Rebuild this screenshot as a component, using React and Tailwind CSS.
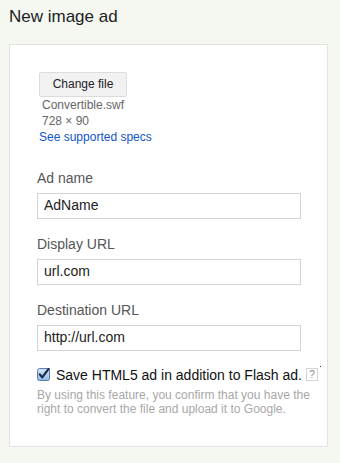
import React from 'react';

const fields = [
  { label: 'Ad name', value: 'AdName' },
  { label: 'Display URL', value: 'url.com' },
  { label: 'Destination URL', value: 'http://url.com' },
];

function CheckIcon() {
  return (
    <svg width="13" height="13" viewBox="0 0 13 13" className="shrink-0">
      <defs>
        <linearGradient id="cb" x1="0" y1="0" x2="0" y2="1">
          <stop offset="0" stopColor="#d6e6f7" />
          <stop offset="1" stopColor="#8fb8e6" />
        </linearGradient>
      </defs>
      <rect x="0.5" y="0.5" width="12" height="12" rx="2" fill="url(#cb)" stroke="#5a7fae" />
      <path d="M2.8 6.4 L5.2 9.4 L11.6 0.8" fill="none" stroke="#1a2a4a" strokeWidth="2.2" strokeLinecap="round" strokeLinejoin="round" />
    </svg>
  );
}

export default function App() {
  return (
    <div className="w-[340px] h-[463px] bg-[#f4f8f1] font-['Liberation_Sans',Arial,sans-serif] overflow-hidden">
      <h1 className="pl-[9px] pt-[6px] h-[44px] text-[17px] leading-[22px] text-[#222]">New image ad</h1>

      <div className="ml-[9px] w-[319px] h-[403px] bg-white border border-[#e3e3e3] pl-[27px] pt-[26px]">
        {/* file section */}
        <div className="pl-[2px]">
          <button className="h-[25px] w-[88px] bg-[#f2f2f2] border border-[#dcdcdc] rounded-[2px] text-[12px] text-[#222]">
            Change file
          </button>
          <div className="pl-[3px] text-[12px] leading-[16px] text-[#666]">
            <div>Convertible.swf</div>
            <div>728 × 90</div>
          </div>
          <a className="block text-[12px] leading-[16px] text-[#1155cc]">See supported specs</a>
        </div>

        {/* fields */}
        <div className="mt-[23px] flex flex-col gap-[15px]">
          {fields.map((f) => (
            <div key={f.label} className="flex flex-col">
              <label className="text-[14px] leading-[20px] text-[#555]">{f.label}</label>
              <div className="mt-[5px] w-[264px] h-[26px] border border-[#d4d4d4] px-[6px] flex items-center text-[14px] text-[#222]">
                {f.value}
              </div>
            </div>
          ))}
        </div>

        {/* html5 option */}
        <div className="mt-[15px] flex items-center">
          <CheckIcon />
          <span className="ml-[6px] text-[14px] leading-[18px] text-[#111]">Save HTML5 ad in addition to Flash ad.</span>
          <span className="ml-[4px] w-[12px] h-[13px] border border-[#d4d4d4] flex items-center justify-center text-[10px] text-[#888]">?</span>
          <span className="self-start ml-[2px] w-[1px] h-[1px] bg-[#333]" />
        </div>
        <p className="mt-[4px] w-[280px] text-[12px] leading-[14px] text-[#a8a8a8]">
          By using this feature, you confirm that you have the right to convert the file and upload it to Google.
        </p>
      </div>
    </div>
  );
}
